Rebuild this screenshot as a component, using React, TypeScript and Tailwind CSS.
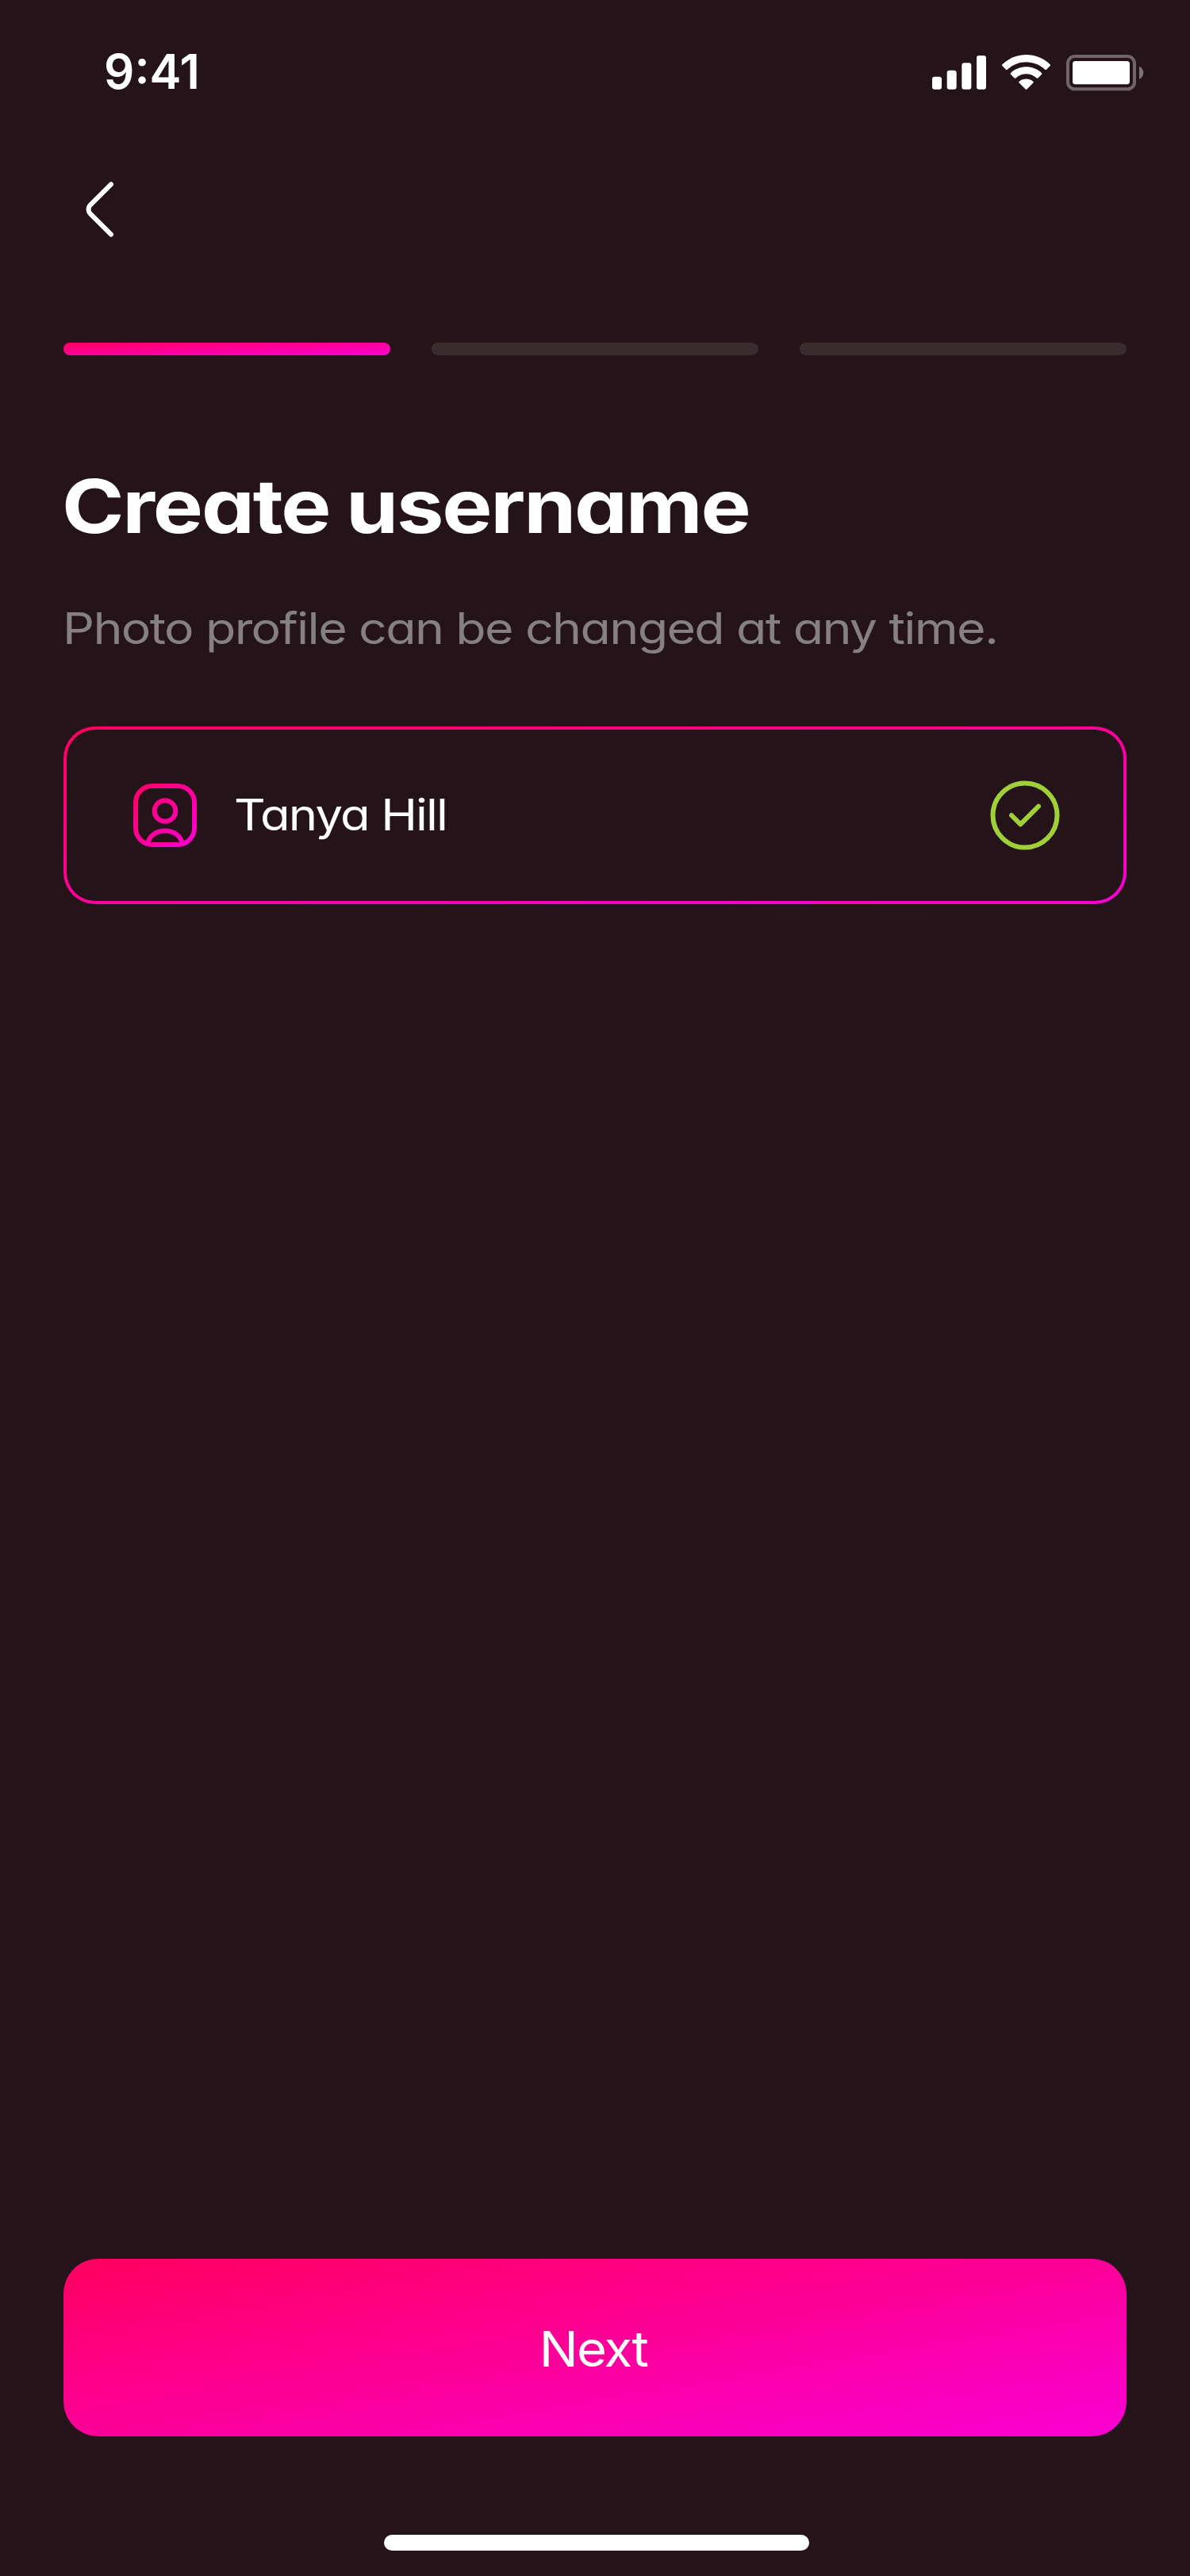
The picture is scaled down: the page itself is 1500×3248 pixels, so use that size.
const FONT = "font-['Inter','Noto_Sans',sans-serif] [font-feature-settings:'cv11']";

function SignalIcon() {
  return (
    <svg width="68" height="43" viewBox="0 0 17 10.75" fill="white">
      <rect x="0" y="6.67" width="3" height="4" rx="0.8" />
      <rect x="4.67" y="4.67" width="3" height="6" rx="0.8" />
      <rect x="9.33" y="2.33" width="3" height="8.34" rx="0.8" />
      <rect x="14" y="0" width="3" height="10.67" rx="0.8" />
    </svg>
  );
}

function WifiIcon() {
  return (
    <svg width="61" height="44" viewBox="0 0 15.27 10.97" fill="white">
      <path d="M7.63661 2.27733C9.8525 2.27742 11.9837 3.12886 13.5896 4.65566C13.7105 4.77354 13.9038 4.77205 14.0229 4.65233L15.1789 3.48566C15.2392 3.42494 15.2729 3.34269 15.2724 3.25711C15.2719 3.17153 15.2373 3.08967 15.1763 3.02966C10.9612 -1.00989 4.31137 -1.00989 0.0962725 3.02966C0.0352139 3.08963 0.00059615 3.17146 0 3.25704C-0.00058075 3.34262 0.0330082 3.4249 0.0932725 3.48566L1.24961 4.65233C1.36863 4.77223 1.56208 4.77372 1.68294 4.65566C3.28909 3.12876 5.42049 2.27732 7.63661 2.27733Z" />
      <path d="M7.63661 6.07299C8.8541 6.07292 10.0281 6.52545 10.9306 7.34266C11.0527 7.45864 11.2449 7.45613 11.3639 7.33699L12.5186 6.17033C12.5794 6.10913 12.6131 6.02612 12.6122 5.93985C12.6114 5.85359 12.5759 5.77127 12.5139 5.71133C9.76566 3.15494 5.50989 3.15494 2.76161 5.71133C2.69953 5.77127 2.66411 5.85363 2.66326 5.93992C2.66242 6.02621 2.69623 6.10923 2.75727 6.17033L3.91194 7.33699C4.03094 7.45613 4.22316 7.45864 4.34527 7.34266C5.24717 6.52599 6.42042 6.07351 7.63661 6.07299Z" />
      <path d="M9.94971 8.62681C9.95148 8.71332 9.9175 8.79672 9.85577 8.85733L7.85827 10.8733C7.79971 10.9326 7.71989 10.9659 7.63661 10.9659C7.55332 10.9659 7.4735 10.9326 7.41494 10.8733L5.41711 8.85733C5.35542 8.79668 5.3215 8.71325 5.32335 8.62675C5.3252 8.54024 5.36266 8.45836 5.42694 8.40033C6.70248 7.32048 8.57073 7.32048 9.84627 8.40033C9.91051 8.4584 9.9479 8.54031 9.94971 8.62681Z" />
    </svg>
  );
}

function BatteryIcon() {
  return (
    <svg width="98" height="46" viewBox="0 0 24.5 11.5" fill="none">
      <rect x="0.5" y="0.5" width="21" height="10.33" rx="2.17" stroke="white" strokeOpacity="0.35" />
      <path
        d="M23 3.67V7.67C23.8 7.33 24.33 6.54 24.33 5.67C24.33 4.79 23.8 4 23 3.67Z"
        fill="white"
        fillOpacity="0.4"
      />
      <rect x="2" y="2" width="18" height="7.33" rx="0.9" fill="white" />
    </svg>
  );
}

function BackIcon() {
  return (
    <svg width="96" height="96" viewBox="0 0 24 24" fill="none" stroke="white" strokeWidth="1.5" strokeLinecap="round" strokeLinejoin="round">
      <path d="M15 19.92L8.48 13.4C7.71 12.63 7.71 11.37 8.48 10.6L15 4.08" />
    </svg>
  );
}

function UserIcon() {
  return (
    <svg width="80" height="80" viewBox="0 0 80 80" fill="none" stroke="url(#user-gradient)" strokeWidth="6" strokeLinecap="round">
      <defs>
        <linearGradient id="user-gradient" x1="0" y1="0" x2="80" y2="80" gradientUnits="userSpaceOnUse">
          <stop stopColor="#ff005f" />
          <stop offset="1" stopColor="#f900d3" />
        </linearGradient>
      </defs>
      <rect x="3" y="3" width="74" height="74" rx="21" />
      <circle cx="40" cy="34.5" r="13.3" />
      <path d="M18.5 75C20 66 29 59.5 40 59.5S60 66 61.5 75" />
    </svg>
  );
}

function CheckIcon() {
  return (
    <svg width="88" height="88" viewBox="0 0 88 88" fill="none" stroke="#a1cf38" strokeWidth="6" strokeLinecap="round" strokeLinejoin="round">
      <circle cx="44" cy="44" r="40.5" />
      <path d="M27 44L38.3 55.3L61 32.7" />
    </svg>
  );
}

export default function App() {
  return (
    <main className={`flex h-[3248px] w-[1500px] flex-col bg-[#241419] text-white ${FONT}`}>
      <header className="flex h-[176px] shrink-0 items-start justify-between pt-[60px] pr-[58px] pl-[131px]">
        <span className="text-[60px] leading-[60px] font-semibold">9:41</span>
        <div className="flex items-start pt-[9px]">
          <div className="mr-5 pt-px">
            <SignalIcon />
          </div>
          <div className="mr-5">
            <WifiIcon />
          </div>
          <BatteryIcon />
        </div>
      </header>

      <div className="flex flex-1 flex-col px-20">
        <button type="button" aria-label="Back" className="mt-10 size-24">
          <BackIcon />
        </button>

        <div className="mt-[120px] grid grid-cols-3 gap-[52px]">
          <div className="h-4 rounded-full bg-[linear-gradient(to_bottom_right,#ff005f,#f900d3)]" />
          <div className="h-4 rounded-full bg-[#3a2b2f]" />
          <div className="h-4 rounded-full bg-[#3a2b2f]" />
        </div>

        <h1 className="mt-[142px] -ml-[2px] w-fit origin-left scale-x-[1.13] text-[94px] leading-[96px] font-bold tracking-[-1.95px] whitespace-nowrap [word-spacing:-2px]">
          Create username
        </h1>
        <p className="mt-[78px] -ml-px w-fit origin-left scale-x-[1.14] text-[55px] leading-[56px] tracking-[-1.45px] whitespace-nowrap text-[#878082]">
          Photo profile can be changed at any time.
        </p>

        <div className="mt-24 flex h-[224px] items-center rounded-[40px] border-4 border-transparent pr-20 pl-[84px] [background:linear-gradient(#241419,#241419)_padding-box,linear-gradient(to_bottom_right,#ff005f,#f900d3)_border-box]">
          <UserIcon />
          <span className="mb-0.5 ml-[47px] origin-left scale-x-[1.12] text-[55px] leading-[56px] tracking-[-1.7px]">
            Tanya Hill
          </span>
          <div className="ml-auto">
            <CheckIcon />
          </div>
        </div>

        <button
          type="button"
          className="mt-auto flex h-[224px] items-center justify-center rounded-[44px] bg-[linear-gradient(to_bottom_right,#ff005f,#f900d3)]"
        >
          <span className="mt-[3px] mr-1 scale-x-[1.05] text-[62px] leading-[64px] tracking-[-1.8px]">Next</span>
        </button>

        <div className="mt-[124px] mb-8 ml-[404px] h-5 w-[536px] rounded-full bg-white" />
      </div>
    </main>
  );
}
